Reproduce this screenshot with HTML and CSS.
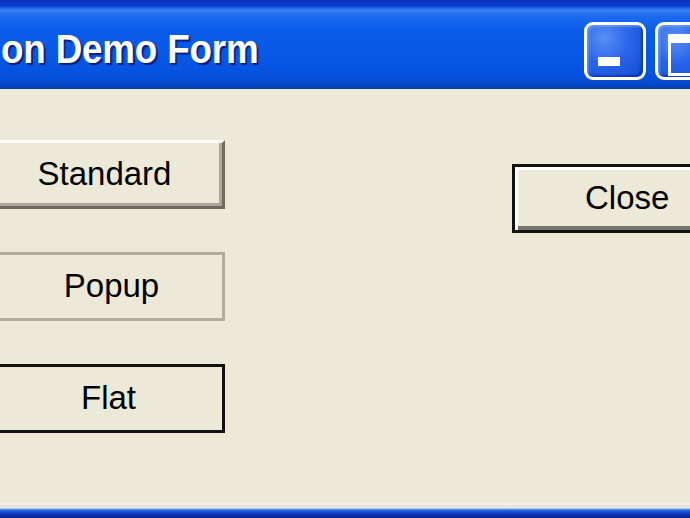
FILE: index.html
```html
<!DOCTYPE html>
<html>
<head>
<meta charset="utf-8">
<link rel="stylesheet" href="styles.css">
</head>
<body>
<div class="window">
  <div class="titlebar">
    <div class="title">on Demo Form</div>
    <div class="controls">
      <div class="cbtn"><span class="min-glyph"></span></div>
      <div class="cbtn"><span class="max-glyph"></span></div>
    </div>
  </div>
  <div class="client">
    <div class="left-col">
      <div class="btn btn-standard">Standard</div>
      <div class="btn btn-popup">Popup</div>
      <div class="btn btn-flat">Flat</div>
    </div>
    <div class="right-col">
      <div class="btn btn-close">Close</div>
    </div>
  </div>
  <div class="frame-bottom"></div>
</div>
</body>
</html>
```

FILE: styles.css
```css
html, body {
  margin: 0;
  padding: 0;
  width: 690px;
  height: 518px;
  overflow: hidden;
}
.window {
  display: flex;
  flex-direction: column;
  width: 690px;
  height: 518px;
  overflow: hidden;
  background: #ece9d8;
  font-family: "Liberation Sans", Arial, sans-serif;
}
.titlebar {
  height: 89px;
  flex: none;
  display: flex;
  align-items: flex-start;
  justify-content: space-between;
  background: linear-gradient(to bottom,
    #0831b8 0px, #0a3fd0 6px, #3a80f4 10px, #1d6af0 16px,
    #0a5ce8 30px, #0757e4 60px, #0650dc 78px, #0346c8 85px, #0a3aa8 89px);
  overflow: hidden;
}
.title {
  margin-top: 27px;
  margin-left: 1px;
  color: #ffffff;
  font-weight: bold;
  font-size: 40px;
  letter-spacing: -0.2px;
  text-shadow: 2px 2px 1px #0a1f80;
  white-space: nowrap;
  transform: scaleX(0.92);
  transform-origin: left center;
}
.controls {
  display: flex;
  gap: 9px;
  margin-top: 22px;
  margin-right: -27px;
}
.cbtn {
  width: 56px;
  height: 52px;
  border: 3px solid #ffffff;
  border-radius: 9px;
  background: radial-gradient(circle at 30% 25%, #5a8ef4 0%, #2a66ea 45%, #1a55dc 80%, #1448c8 100%);
  box-shadow: inset -2px -2px 2px rgba(0,20,120,0.4), inset 2px 2px 2px rgba(160,200,255,0.4);
  position: relative;
}
.min-glyph {
  position: absolute;
  left: 11px;
  top: 32px;
  width: 22px;
  height: 9px;
  background: #ffffff;
}
.max-glyph {
  position: absolute;
  left: 10px;
  top: 9px;
  width: 34px;
  height: 30px;
  border: 3px solid #ffffff;
  border-top-width: 9px;
}
.client {
  flex: 1;
  display: flex;
  align-items: flex-start;
  background: #ece9d8;
}
.left-col {
  display: flex;
  flex-direction: column;
  gap: 43px;
  padding-top: 51px;
  margin-left: -16px;
}
.right-col {
  padding-top: 75px;
  margin-left: 287px;
}
.btn {
  box-sizing: border-box;
  width: 241px;
  height: 69px;
  display: flex;
  align-items: center;
  justify-content: center;
  font-size: 33px;
  color: #000000;
  background: #ece9d8;
  padding-bottom: 2px;
}
.btn-standard {
  border-top: 3px solid #ffffff;
  border-left: 3px solid #ffffff;
  border-right: 3px solid #6e6c62;
  border-bottom: 3px solid #6e6c62;
  box-shadow: inset -3px -3px 0 #aca899;
}
.btn-popup {
  border: 3px solid #b0ad9f;
  box-shadow: inset 0 0 2px rgba(255,255,255,0.6);
  padding-left: 14px;
}
.btn-flat {
  border: 3px solid #111111;
  padding-left: 8px;
}
.btn-close {
  width: 250px;
  border: 3px solid #111111;
  box-shadow: inset 3px 3px 0 #ffffff, inset -3px -4px 0 #7a776c;
  justify-content: flex-start;
  padding-left: 70px;
}
.frame-bottom {
  height: 16px;
  flex: none;
  background: linear-gradient(to bottom,
    #ece9d8 0px, #f6f4ec 2px, #e4e2da 4px, #f0eee2 6px,
    #6a9cf0 7px, #1a5ae0 9px, #0a3ab8 12px, #0a2090 16px);
}
```
